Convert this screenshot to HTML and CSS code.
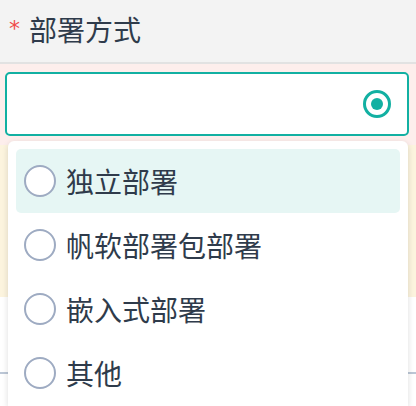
FILE: index.html
```html
<!DOCTYPE html>
<html lang="zh-CN">
<head>
    <meta charset="UTF-8">
    <meta name="viewport" content="width=device-width, initial-scale=1.0">
    <title>部署方式</title>
    <link rel="stylesheet" href="styles.css">
</head>
<body>
<div class="page">
    <div class="field-head">
        <span class="required">*</span>
        <span class="field-title">部署方式</span>
    </div>

    <div class="band band-error">
        <div class="select-box">
            <span class="radio radio-on"></span>
        </div>
    </div>
    <div class="band band-warn"></div>
    <div class="band band-plain"></div>
    <div class="divider"></div>

    <!-- Dropdown options -->
    <div class="dropdown">
        <div class="option active">
            <span class="radio"></span>
            <span class="option-label">独立部署</span>
        </div>
        <div class="option">
            <span class="radio"></span>
            <span class="option-label">帆软部署包部署</span>
        </div>
        <div class="option">
            <span class="radio"></span>
            <span class="option-label">嵌入式部署</span>
        </div>
        <div class="option">
            <span class="radio"></span>
            <span class="option-label">其他</span>
        </div>
    </div>
</div>
</body>
</html>
```

FILE: styles.css
```css
body {
    margin: 0;
    font-family: "Noto Sans CJK SC", "Noto Sans", sans-serif;
    color: #2f3b4b;
    background: #ffffff;
    overflow: hidden;
}
.page {
    position: relative;
    width: 416px;
    height: 406px;
    overflow: hidden;
}
.field-head {
    height: 64px;
    background-color: #f3f3f3;
    border-bottom: 2px solid #e2e2e2;
    display: flex;
    align-items: center;
    padding-left: 9px;
    box-sizing: border-box;
}
.required {
    color: #f04a4a;
    font-family: "DejaVu Sans", sans-serif;
    font-size: 22px;
    line-height: 1;
    margin-right: 9px;
    margin-top: -4px;
}
.field-title {
    font-size: 28px;
    line-height: 1;
    margin-top: -4px;
}
.band-error {
    background-color: #fdeeec;
    height: 81px;
    padding: 8px 7px 0 5px;
    box-sizing: border-box;
}
.band-warn {
    background-color: #fcf4de;
    height: 152px;
}
.band-plain {
    height: 75px;
}
.divider {
    height: 2px;
    background-color: #bcc7d6;
}
.select-box {
    height: 64px;
    border: 2px solid #12b0a2;
    border-radius: 5px;
    background: #ffffff;
    box-sizing: border-box;
    display: flex;
    align-items: center;
    justify-content: flex-end;
    padding-right: 16px;
}
.radio {
    width: 32px;
    height: 32px;
    border: 2px solid #9eabc2;
    border-radius: 50%;
    box-sizing: border-box;
    background: #ffffff;
    flex-shrink: 0;
}
.radio-on {
    width: 28px;
    height: 28px;
    border: 3px solid #12b0a2;
    position: relative;
}
.radio-on::after {
    content: "";
    position: absolute;
    left: 5px;
    top: 5px;
    width: 12px;
    height: 12px;
    border-radius: 50%;
    background: #12b0a2;
}
.dropdown {
    position: absolute;
    left: 8px;
    top: 141px;
    width: 400px;
    height: 265px;
    background: #ffffff;
    border-radius: 6px 6px 0 0;
    box-shadow: 0 2px 6px rgba(0, 0, 0, 0.14);
    padding: 8px;
    box-sizing: border-box;
}
.option {
    height: 64px;
    display: flex;
    align-items: center;
    padding-left: 8px;
    border-radius: 5px;
}
.option.active {
    background-color: #e6f6f4;
}
.option-label {
    font-size: 28px;
    margin-left: 10px;
    line-height: 1;
}
```
